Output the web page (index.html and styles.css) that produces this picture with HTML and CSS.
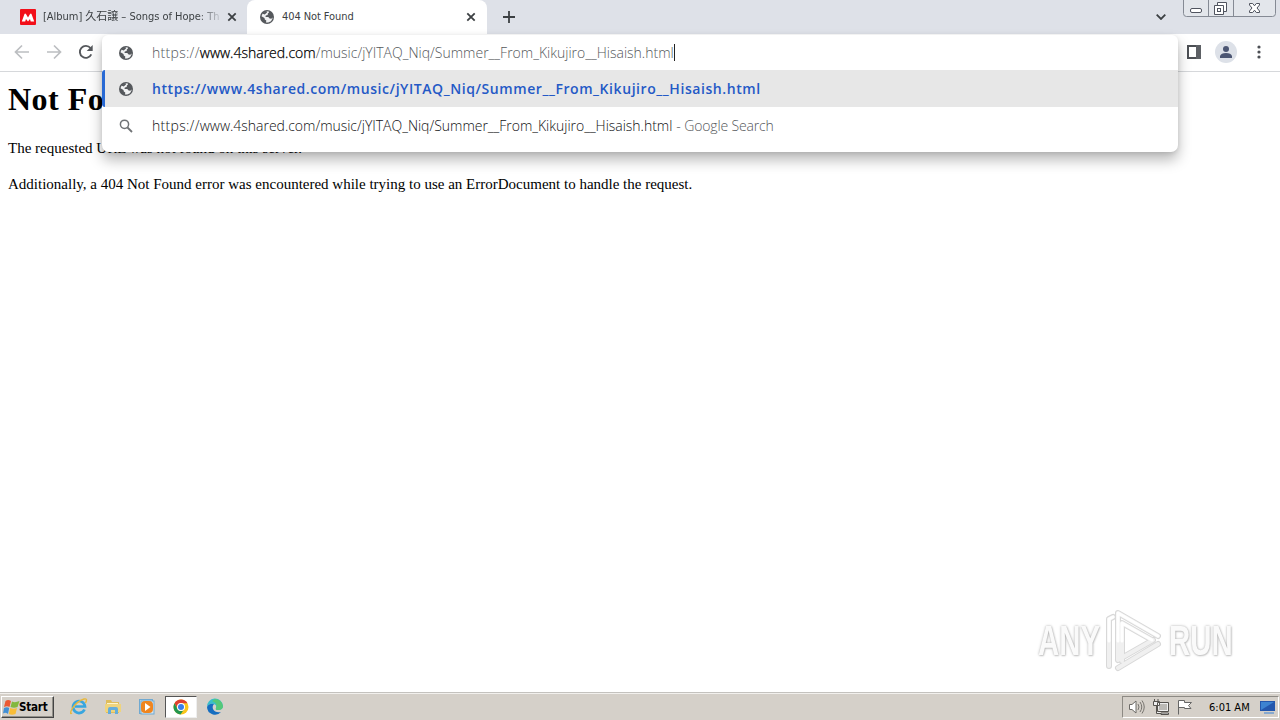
FILE: index.html
```html
<!DOCTYPE html>
<html lang="en">
<head>
<meta charset="utf-8">
<title>404 Not Found</title>
<link rel="stylesheet" href="styles.css">
</head>
<body>
<svg class="defs" width="0" height="0">
  <symbol id="globe" viewBox="0 0 16 16"><circle cx="8" cy="8" r="7" fill="#55585c"/><path d="M7.2 2.4 9.5 2.2 10 3.5 8.8 4.6 8.7 6 6.8 6.6 6.5 8H9.3L10.6 9.4 12.4 9.8 13.4 8.4 13.5 9.5 12 12.2 9.2 13.6 7 13.4 7.3 11.4 5.8 10.6 5.5 9 2.5 7.2 3.5 4.8Z" fill="#f1f2f3"/><path d="M3.2 4.5 5.7 5.6 8 3.5 7.4 2.1Z" fill="#55585c"/></symbol>
  <symbol id="close" viewBox="0 0 10 10"><path d="M1.3 1.3 8.7 8.7M8.7 1.3 1.3 8.7" stroke="#3c4043" stroke-width="1.8"/></symbol>
</svg>
<header class="tabstrip">
  <div class="tab">
    <svg class="favicon" viewBox="0 0 16 16"><rect width="16" height="16" rx="1" fill="#f20f19"/><path d="M1.800 12.500 4.400 5.200Q5 3.800 6.100 5.200L8 8.500 9.900 5.200Q11 3.800 11.600 5.200L14.200 12.500H10.700L10 10 8 12.500 6 10 5.200 12.500Z" fill="#fff"/></svg>
    <span class="tab-title first">[Album] 久石譲 – Songs of Hope: Th</span>
    <svg class="close"><use href="#close"/></svg>
  </div>
  <div class="tab active">
    <svg class="favicon"><use href="#globe"/></svg>
    <span class="tab-title second">404 Not Found</span>
    <svg class="close"><use href="#close"/></svg>
  </div>
  <svg class="plus" viewBox="0 0 12 12"><path d="M6 0V12M0 6H12" stroke="#3c4043" stroke-width="1.8"/></svg>
  <svg class="chevron" viewBox="0 0 10 6"><path d="M.7.7 5 5 9.3.7" fill="none" stroke="#3c4043" stroke-width="1.8"/></svg>
  <svg class="window-buttons" viewBox="0 0 93 17">
    <path d="M.5 0V13.5Q.5 16.5 3.5 16.5H89.5Q92.5 16.5 92.5 13.5V0M25.5 0V16M50.5 0V16" fill="#e3e6eb" stroke="#858a94"/>
    <rect x="7.5" y="8.5" width="11" height="4" rx="1.5" fill="#fff" stroke="#50545f"/>
    <path d="M34.500 2.500H43.500V11.500H34.500Z" fill="#fff" stroke="#50545f"/><path d="M31.500 5.500H40.500V14.500H31.500Z" fill="#fff" stroke="#50545f"/><rect x="34.500" y="8.500" width="3" height="3" fill="none" stroke="#50545f"/>
    <path d="M66.500 3.500H69.700L71.500 5.800 73.300 3.500H76.500V5L74 8 76.500 11V12.500H73.300L71.500 10.200 69.700 12.500H66.500V11L69 8 66.500 5Z" fill="#fff" stroke="#50545f"/>
  </svg>
</header>
<div class="toolbar">
  <svg class="nav" viewBox="0 0 16 16"><path d="M15 8H2M8 1.500 1.500 8 8 14.500" fill="none" stroke="#bcbec1" stroke-width="1.7"/></svg>
  <svg class="nav" viewBox="0 0 16 16"><path d="M1 8H14M8 1.500 14.500 8 8 14.500" fill="none" stroke="#bcbec1" stroke-width="1.7"/></svg>
  <svg class="nav" viewBox="0 0 16 16"><path d="M13.300 10.400A6 6 0 1 1 12.500 4" fill="none" stroke="#55585c" stroke-width="1.900"/><path d="M14.700 1V7H8.700Z" fill="#55585c"/></svg>
  <div class="tools">
    <svg class="panel" viewBox="0 0 14 14"><path d="M1 1H13V13H1Z" fill="#fff" stroke="#4c4f54" stroke-width="2"/><path d="M9 0H14V14H9Z" fill="#5d6065"/></svg>
    <svg class="avatar" viewBox="0 0 22 22"><circle cx="11" cy="11" r="11" fill="#dde1e8"/><circle cx="11" cy="8" r="3" fill="#4c5673"/><path d="M5 17V15Q6 12 11 12T17 15V17Z" fill="#4c5673"/></svg>
    <svg class="dots" viewBox="0 0 4 14"><circle cx="2" cy="2" r="1.600"/><circle cx="2" cy="7" r="1.600"/><circle cx="2" cy="12" r="1.600"/></svg>
  </div>
</div>
<main class="page">
  <h1>Not Found</h1>
  <p class="requested">The requested URL was not found on this server.</p>
  <p class="additional">Additionally, a 404 Not Found error was encountered while trying to use an ErrorDocument to handle the request.</p>
</main>
<section class="omnibox">
  <div class="row input"><svg class="row-icon"><use href="#globe"/></svg><span class="url typed"><span class="scheme">https://</span><b>www.4shared.com</b>/music/jYITAQ_Niq/Summer__From_Kikujiro__Hisaish.html</span><i class="caret"></i></div>
  <div class="row selected"><svg class="row-icon"><use href="#globe"/></svg><span class="url match">https://www.4shared.com/music/jYITAQ_Niq/Summer__From_Kikujiro__Hisaish.html</span></div>
  <div class="row search"><svg class="row-icon" viewBox="0 0 16 16"><circle cx="6.500" cy="6.300" r="4.100" fill="none" stroke="#707376" stroke-width="1.500"/><path d="M9.500 9.500 14 14" stroke="#707376" stroke-width="1.800"/></svg><span class="url query"><span class="scheme">https://</span>www.4shared.com/music/jYITAQ_Niq/Summer__From_Kikujiro__Hisaish.html</span><span class="provider">- Google Search</span></div>
</section>
<div class="watermark">
  <span class="any">ANY</span>
  <svg viewBox="0 0 60 64"><g fill="none" stroke-linejoin="round" stroke-linecap="round"><path d="M5 57V10L9 8M14 51V4L54 27M18 52V14L48 31M14 59 54 35M14 51 49 31" stroke="#d8d8d8" stroke-width="6"/><path d="M5 57V10L9 8M14 51V4L54 27M18 52V14L48 31M14 59 54 35M14 51 49 31" stroke="#f0f0f0" stroke-width="4"/><path d="M5 32V10L9 8M14 32V4L54 27M18 32V14L48 31" stroke="#fff" stroke-width="3"/></g></svg>
  <span class="run">RUN</span>
</div>
<footer class="taskbar">
  <div class="start"><svg viewBox="0 0 17 16"><path d="M2.500 2Q5 0 8 2L6.500 8Q4 6.500 1 8Z" fill="#eb5933"/><path d="M9 2.500Q12 4 16.500 2L14.500 8Q11 9.500 7.500 8Z" fill="#83b83d"/><path d="M1 9Q4 7.500 6.200 9L5 15Q2.500 13 0 14.500Z" fill="#428fd4"/><path d="M7.200 9Q10.500 10.500 14 9L12.500 15Q9 16.500 5.800 15Z" fill="#f8bd38"/></svg><span>Start</span></div>
  <div class="launch">
    <svg viewBox="0 0 18 18"><path d="M14.500 11.500A6 6 0 1 1 15 8.500H5" fill="none" stroke="#38a6df" stroke-width="2.700"/><path d="M2 15Q-1 17 2 11 7 3 14 1 18 0 15.500 5" fill="none" stroke="#e8b83c" stroke-width="1.400"/></svg>
    <svg viewBox="0 0 18 18"><path d="M2 2H7L8 4H15V15H2Z" fill="#dfbd5c"/><path d="M3 5H14V9H3Z" fill="#fff5c8"/><path d="M1 6H17V14H1Z" fill="#efd47d"/><path d="M4 16V11Q4 9 6 9H12Q14 9 14 11V16H11V12H7V16Z" fill="#65addb"/></svg>
    <svg viewBox="0 0 18 18"><rect x="1.500" y="1.500" width="13" height="14" fill="#b9d8ef" stroke="#70a9d1"/><rect x="3" y="3" width="13" height="13" fill="#d4e6f3" stroke="#70a9d1"/><rect x="3" y="3" width="12" height="12" rx="4" fill="#ef851f"/><path d="M7 5 12.500 9 7 13Z" fill="#fff"/></svg>
    <div class="task-active"><svg viewBox="0 0 18 18"><circle cx="9" cy="9" r="7.500" fill="#f9c51b"/><path d="M2.500 5.200A7.500 7.500 0 0 1 15.500 5.200H9A4 4 0 0 0 5.500 10.500Z" fill="#df4031"/><path d="M2.500 5.200A7.500 7.500 0 0 0 8.500 16.500L12.300 11A4 4 0 0 1 5.500 11Z" fill="#229650"/><circle cx="9" cy="9" r="4" fill="#fff"/><circle cx="9" cy="9" r="3" fill="#397eea"/></svg></div>
    <svg viewBox="0 0 18 18"><path d="M1 9A8 8 0 0 1 17 8Q17 12 12 12 9 12 10 10 11 7 8 6 3 5 1 9Z" fill="#38bfcb"/><path d="M9 1A8 8 0 0 1 17 8Q17 12 12 12 9 12 10 10 12 5 6 3Z" fill="#55c878"/><path d="M1 9Q3 5 8 6 6 8 7 11 9 15 15 14A8 8 0 0 1 1 9Z" fill="#156dc0"/></svg>
  </div>
  <div class="tray">
    <svg class="speaker" viewBox="0 0 18 16"><path d="M1.500 5.500H4L8 2V14L4 10.500H1.500Z" fill="#fff" stroke="#6c6a66"/><path d="M10 5Q12 8 10 11M12 3Q15.500 8 12 13M14 1.500Q18.500 8 14 14.500" fill="none" stroke="#77746f"/></svg>
    <svg class="network" viewBox="0 0 18 16"><path d="M5.500 3.500H16.500V12.500H5.500ZM9 15.500H16.500V14H9ZM1.500 2.500H7.500V6.500H1.500ZM2.500 0V2M6 0V2M4.500 7V14.500H9" fill="#eee" stroke="#55524e"/><path d="M8 5H15V11H7V7H8Z" fill="#bbb9b5"/></svg>
    <svg class="flag" viewBox="0 0 17 16"><path d="M2.500 15.500V1.500H8.500V3.500H15.500L12.500 6.500 15 9.500H8.500V8.500H3" fill="#fff" stroke="#666"/></svg>
    <span class="clock">6:01 AM</span>
    <svg class="desktop" viewBox="0 0 17 16"><path d="M1 2H16V12H1Z" fill="#2357ad"/><path d="M2 3H15L2 11Z" fill="#3c83d1"/><path d="M5 13H15V15H5Z" fill="#87a9cf"/></svg>
  </div>
</footer>
</body>
</html>
```
FILE: styles.css
```css
* { box-sizing: border-box; }
body { margin: 0; width: 1280px; height: 720px; overflow: hidden; position: relative; display: flex; flex-direction: column; background: #fff; font-family: "Open Sans", "Noto Sans CJK JP", sans-serif; }
svg { display: block; flex: none; }
.defs { position: absolute; }
.tabstrip { height: 34px; flex: none; display: flex; background: #dee1e8; }
.tab { width: 247px; display: flex; align-items: center; padding-left: 20px; }
.tab.active { width: 240px; padding-left: 12px; border-radius: 8px 8px 0 0; background: #fff; }
.favicon { width: 16px; height: 16px; }
.tab-title { margin-left: 7px; width: 177px; white-space: nowrap; font: 11px "DejaVu Sans Condensed", "Noto Sans CJK JP", sans-serif; line-height: 18px; color: #3c4043; }
.first { letter-spacing: -.03px; -webkit-mask-image: linear-gradient(to right, #000 154px, transparent 181px); mask-image: linear-gradient(to right, #000 154px, transparent 181px); }
.second { width: 176px; letter-spacing: -.08px; }
.close { width: 10px; height: 10px; margin-left: 7px; }
.active .close { margin-left: 8px; }
.plus { width: 12px; height: 12px; margin: 11px 0 0 16px; }
.chevron { width: 10px; height: 6px; margin: 14px 17px 0 auto; }
.window-buttons { width: 93px; height: 17px; margin-right: 4px; }
.toolbar { flex: none; height: 38px; display: flex; align-items: center; gap: 16px; padding: 0 19px 2px 14px; border-bottom: 1px solid #d6d8db; }
.nav { width: 16px; height: 16px; }
.tools { margin-left: auto; display: flex; align-items: center; }
.panel { width: 14px; height: 14px; }
.avatar { width: 22px; height: 22px; margin: 0 20px 0 14px; }
.dots { width: 4px; height: 14px; fill: #4c4f54; }
.page { flex: 1; padding: 8px; font: 16px "Liberation Serif", serif; color: #000; }
.page h1 { margin: 0; font-size: 32px; line-height: 38px; height: 59px; letter-spacing: .5px; }
.page p { margin: 0 0 18px; line-height: 18px; font-size: 15px; white-space: nowrap; }
.omnibox { position: absolute; left: 102px; top: 35px; width: 1076px; height: 117px; background: #fff; border-radius: 6px 6px 7px 7px; box-shadow: 0 8px 14px rgba(0,0,0,.28), 0 1px 4px rgba(0,0,0,.1); }
.row { height: 37px; display: flex; align-items: center; padding-left: 16px; }
.input { height: 35px; }
.selected { background: #e7e7e7; border-left: 3px solid #2869d4; border-radius: 3px 0 0 3px; padding-left: 13px; }
.row-icon { width: 16px; height: 16px; }
.url, .provider { white-space: nowrap; font: 300 14px "Open Sans", sans-serif; line-height: 20px; }
.url { margin-left: 18px; color: #101113; }
.scheme { letter-spacing: .3px; }
.typed { color: #55585b; }
.typed b { font-weight: 300; color: #000; -webkit-text-stroke: .25px #000; }
.query { letter-spacing: -.02px; }
.match { color: #2459c6; font-weight: 600; letter-spacing: .57px; }
.caret { width: 1px; height: 17px; background: #222; }
.provider { margin-left: 4px; color: #55585b; letter-spacing: -.15px; }
.watermark { position: absolute; left: 1038px; top: 609px; height: 64px; display: flex; align-items: center; color: #fafafa; text-shadow: 0 0 3px #aaa, 1px 1px 2px #d2d2d2; }
.watermark span { display: block; width: 65px; white-space: nowrap; font: bold 42px "Liberation Sans", sans-serif; transform: scaleX(.7); transform-origin: left; }
.watermark svg { width: 60px; height: 64px; margin: 0 5px 0 1px; }
.taskbar { flex: none; height: 28px; display: flex; align-items: center; background: #d5d0c9; border-top: 1px solid #c4c2be; box-shadow: inset 0 1px #f2f0ed; padding: 1px 1px 0; }
.start { width: 53px; height: 22px; display: flex; align-items: center; padding-left: 1px; border: 1px solid; border-color: #fff #444 #444 #fff; box-shadow: inset -1px -1px #929089; font: bold 11.500px "DejaVu Sans Condensed", sans-serif; color: #000; }
.start svg { width: 17px; height: 16px; margin-right: -1px; }
.start span { letter-spacing: -.2px; }
.launch { display: flex; align-items: center; margin-left: 16px; }
.launch svg { width: 18px; height: 18px; margin-right: 16px; }
.launch > svg:nth-child(3) { margin-right: 9px; }
.task-active { width: 32px; height: 22px; display: flex; justify-content: center; align-items: center; background: #fff; border: 1px solid; border-color: #555 #eee #eee #555; margin-right: 9px; }
.launch .task-active svg { margin: 0; }
.tray { margin-left: auto; width: 157px; height: 22px; display: flex; align-items: center; border: 1px solid; border-color: #8d8a84 #fff #fff #8d8a84; padding-left: 5px; }
.speaker, .network { width: 18px; height: 16px; margin-right: 6px; }
.flag { width: 17px; height: 16px; }
.clock { margin-left: 16px; width: 47px; white-space: nowrap; font: 11px "DejaVu Sans Condensed", sans-serif; color: #000; }
.desktop { width: 17px; height: 16px; margin-left: 3px; }
```
